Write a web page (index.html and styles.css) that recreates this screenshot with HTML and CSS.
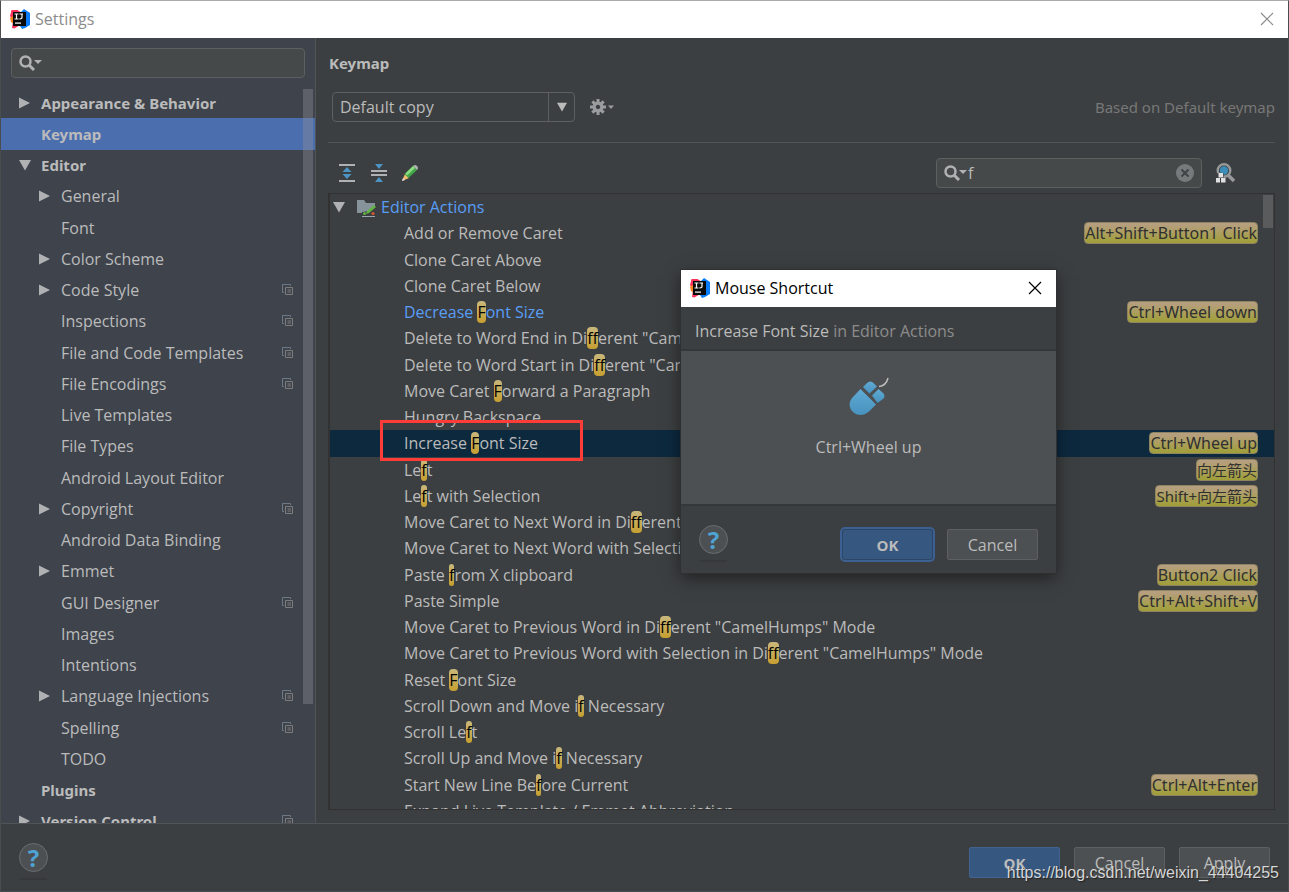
FILE: index.html
```html
<!DOCTYPE html>
<html lang="en">
<head>
<meta charset="utf-8">
<title>Settings</title>
<link rel="stylesheet" href="styles.css">
</head>
<body>
<svg class="defs" aria-hidden="true">
  <defs>
    <linearGradient id="gMouse" x1="0" y1="0" x2="0" y2="1"><stop offset="0" stop-color="#60abd3"/><stop offset="1" stop-color="#4792bf"/></linearGradient>
    <symbol id="logo" viewBox="0 0 20 20">
      <path fill="#fc315c" d="M1.500 1l6 0 3 2-2 14-4 2.500-2.500-.5 1-7-3-5z"/>
      <path fill="#fc801d" d="M0 9l4-3v9l-3-2z"/>
      <path fill="#087cfa" d="M10 4l4-4 6 4v12l-5 3-3 1-2-3z"/>
      <rect x="3" y="3" width="13" height="14" fill="#0a0a0a"/>
      <path fill="none" stroke="#fff" stroke-width="1.200" d="M4.500 5h4M6.500 5v5M4.500 10h4M9.500 5h3.500M12 5v3.500q0 1.500-2.500 1.300"/>
      <rect x="5" y="13.500" width="6" height="1.200" fill="#fff"/>
    </symbol>
    <symbol id="right" viewBox="0 0 12 12"><path fill="currentColor" d="M0 0.500L11 6 0 11.500z"/></symbol>
    <symbol id="down" viewBox="0 0 12 12"><path fill="currentColor" d="M0 1h12L6 11.500z"/></symbol>
    <symbol id="search" viewBox="0 0 24 16">
      <circle cx="6.500" cy="6.500" r="5" fill="none" stroke="#afb1b3" stroke-width="2.500"/>
      <path d="M10 10l5 5" stroke="#afb1b3" stroke-width="3"/>
      <path d="M15 5h8l-4 4z" fill="#afb1b3"/>
    </symbol>
    <symbol id="copy" viewBox="0 0 12 12">
      <path fill="none" stroke="#6c7883" d="M2 8.500H.5v-8h8V2"/>
      <path fill="none" stroke="#7d7d7d" d="M3.500 3.500h7v7h-7zM5.500 6h3.500M5.500 8h3.500"/>
    </symbol>
    <symbol id="close" viewBox="0 0 14 14"><path d="M1 1l12 12M13 1L1 13" fill="none" stroke="currentColor" stroke-width="1.200"/></symbol>
  </defs>
</svg>

<div class="window">
  <header class="titlebar">
    <svg class="logo"><use href="#logo"/></svg>
    <span class="title">Settings</span>
    <button class="close" aria-label="Close"><svg><use href="#close"/></svg></button>
  </header>

  <div class="content">
    <aside class="sidebar">
      <label class="search side-search"><svg class="lens"><use href="#search"/></svg><input type="text" aria-label="Search settings"></label>
      <div class="tree-view">
        <ul class="tree">
          <li class="top"><svg class="arrow"><use href="#right"/></svg><span>Appearance &amp; Behavior</span></li>
          <li class="top selected"><i class="arrow"></i><span>Keymap</span></li>
          <li class="top"><svg class="arrow"><use href="#down"/></svg><span>Editor</span></li>
          <li><svg class="arrow"><use href="#right"/></svg><span>General</span></li>
          <li><i class="arrow"></i><span>Font</span></li>
          <li><svg class="arrow"><use href="#right"/></svg><span>Color Scheme</span></li>
          <li><svg class="arrow"><use href="#right"/></svg><span>Code Style</span><svg class="copy"><use href="#copy"/></svg></li>
          <li><i class="arrow"></i><span>Inspections</span><svg class="copy"><use href="#copy"/></svg></li>
          <li><i class="arrow"></i><span>File and Code Templates</span><svg class="copy"><use href="#copy"/></svg></li>
          <li><i class="arrow"></i><span>File Encodings</span><svg class="copy"><use href="#copy"/></svg></li>
          <li><i class="arrow"></i><span>Live Templates</span></li>
          <li><i class="arrow"></i><span>File Types</span></li>
          <li><i class="arrow"></i><span>Android Layout Editor</span></li>
          <li><svg class="arrow"><use href="#right"/></svg><span>Copyright</span><svg class="copy"><use href="#copy"/></svg></li>
          <li><i class="arrow"></i><span>Android Data Binding</span></li>
          <li><svg class="arrow"><use href="#right"/></svg><span>Emmet</span></li>
          <li><i class="arrow"></i><span>GUI Designer</span><svg class="copy"><use href="#copy"/></svg></li>
          <li><i class="arrow"></i><span>Images</span></li>
          <li><i class="arrow"></i><span>Intentions</span></li>
          <li><svg class="arrow"><use href="#right"/></svg><span>Language Injections</span><svg class="copy"><use href="#copy"/></svg></li>
          <li><i class="arrow"></i><span>Spelling</span><svg class="copy"><use href="#copy"/></svg></li>
          <li><i class="arrow"></i><span>TODO</span></li>
          <li class="top"><i class="arrow"></i><span>Plugins</span></li>
          <li class="top"><svg class="arrow"><use href="#right"/></svg><span>Version Control</span><svg class="copy"><use href="#copy"/></svg></li>
        </ul>
        <div class="thumb side-thumb"></div>
      </div>
    </aside>

    <main class="main">
      <h1>Keymap</h1>
      <div class="scheme">
        <div class="combo">
          <select aria-label="Keymap scheme"><option>Default copy</option></select>
          <span class="combo-arrow"><svg><use href="#down"/></svg></span>
        </div>
        <button class="icon-button" aria-label="Scheme actions">
          <svg class="gear" viewBox="0 0 26 16"><g fill="#9a9c9e"><path fill-rule="evenodd" d="M8 2.500a5.500 5.500 0 1 0 .01 0zM8 5.800a2.200 2.200 0 1 1-.01 0z"/><path d="M6.500 0h3v4h-3zM6.500 12h3v4h-3zM0 6.500h4v3H0zM12 6.500h4v3h-4z"/><path d="M6.500 0h3v4h-3zM6.500 12h3v4h-3zM0 6.500h4v3H0zM12 6.500h4v3h-4z" transform="rotate(45 8 8)"/><path d="M18 6.500h6l-3 3.500z"/></g></svg>
        </button>
        <span class="based">Based on Default keymap</span>
      </div>

      <div class="toolbar">
        <button class="icon-button" aria-label="Expand all"><svg class="tool" viewBox="0 0 18 18"><path d="M1 1h16M1 17h16" stroke="#afb1b3" stroke-width="2"/><path d="M9 3l4.500 5h-9zM9 15l4.500-5h-9z" fill="#4c94c4"/></svg></button>
        <button class="icon-button" aria-label="Collapse all"><svg class="tool" viewBox="0 0 18 18"><path d="M1 7h16M1 11h16" stroke="#afb1b3" stroke-width="2"/><path d="M5 0h8L9 5zM5 18h8l-4-5z" fill="#4c94c4"/></svg></button>
        <button class="icon-button" aria-label="Edit shortcut"><svg class="tool" viewBox="1 0 18 18"><path d="M1 17l3-7 4 4z" fill="#f2bb72"/><path d="M1 17l1-3 2 2z" fill="#ddd"/><path d="M3.500 10L12 2l4 4-8.500 8z" fill="#43a647"/><path d="M4.500 9.500L12 2l2 2-8 7.500z" fill="#8bdc83"/><path d="M12 2q2-2 4 0t0 4z" fill="#aeb3ad"/></svg></button>
        <label class="search action-search"><svg class="lens"><use href="#search"/></svg><input type="text" value="f" aria-label="Search actions"><button class="clear" aria-label="Clear"><svg viewBox="0 0 18 18"><circle cx="9" cy="9" r="9" fill="#777a7b"/><path d="M5.500 5.500l7 7M12.500 5.500l-7 7" stroke="#3f4345" stroke-width="2"/></svg></button></label>
        <button class="icon-button" aria-label="Find actions by shortcut"><svg class="find" viewBox="1 0 20 20"><path d="M13 12l6 6" stroke="#96989a" stroke-width="3.500"/><circle cx="9" cy="7.500" r="6.300" fill="#3b4245" stroke="#96989a" stroke-width="2.400"/><circle cx="9" cy="7.500" r="4.200" fill="#3b8db8"/><path d="M2.500 10h6v5h-6z" fill="#3c3f41"/><path d="M1 15h4v4.500H1zM6 15h4.500v4.500H6zM3.500 10H8v4.500H3.500z" fill="#e0e0e0"/></svg></button>
      </div>

      <div class="actions-view">
        <ul class="actions">
          <li class="group"><svg class="arrow"><use href="#down"/></svg><svg class="folder" viewBox="0 0 20 18"><path d="M0 1h7l2 3h9v10H0z" fill="#87939a"/><path d="M5 13l8-1 5-4v8H5z" fill="#3c3f41"/><path d="M9 15l1-3 7-6 2 2-7 6z" fill="#62b543"/><circle cx="7.500" cy="14.500" r="1.500" fill="#62b543"/><circle cx="16" cy="14.500" r="1.500" fill="#e05a33"/><path d="M5 17.500h13" stroke="#9aa7b0"/></svg><span>Editor Actions</span></li>
          <li><span>Add or Remove Caret</span><kbd>Alt+Shift+Button1 Click</kbd></li>
          <li><span>Clone Caret Above</span></li>
          <li><span>Clone Caret Below</span></li>
          <li class="changed"><span>Decrease <mark>F</mark>ont Size</span><kbd>Ctrl+Wheel down</kbd></li>
          <li><span>Delete to Word End in Di<mark>f</mark><mark>f</mark>erent "CamelHumps" Mode</span></li>
          <li><span>Delete to Word Start in Di<mark>f</mark><mark>f</mark>erent "CamelHumps" Mode</span></li>
          <li><span>Move Caret <mark>F</mark>orward a Paragraph</span></li>
          <li><span>Hungry Backspace</span></li>
          <li class="current"><span>Increase <mark>F</mark>ont Size</span><kbd>Ctrl+Wheel up</kbd><div class="callout"></div></li>
          <li><span>Le<mark>f</mark>t</span><kbd class="cjk">向左箭头</kbd></li>
          <li><span>Le<mark>f</mark>t with Selection</span><kbd class="cjk">Shift+向左箭头</kbd></li>
          <li><span>Move Caret to Next Word in Di<mark>f</mark><mark>f</mark>erent "CamelHumps" Mode</span></li>
          <li><span>Move Caret to Next Word with Selection in Di<mark>f</mark><mark>f</mark>erent "CamelHumps" Mode</span></li>
          <li><span>Paste <mark>f</mark>rom X clipboard</span><kbd>Button2 Click</kbd></li>
          <li><span>Paste Simple</span><kbd>Ctrl+Alt+Shift+V</kbd></li>
          <li><span>Move Caret to Previous Word in Di<mark>f</mark><mark>f</mark>erent "CamelHumps" Mode</span></li>
          <li><span>Move Caret to Previous Word with Selection in Di<mark>f</mark><mark>f</mark>erent "CamelHumps" Mode</span></li>
          <li><span>Reset <mark>F</mark>ont Size</span></li>
          <li><span>Scroll Down and Move i<mark>f</mark> Necessary</span></li>
          <li><span>Scroll Le<mark>f</mark>t</span></li>
          <li><span>Scroll Up and Move i<mark>f</mark> Necessary</span></li>
          <li><span>Start New Line Be<mark>f</mark>ore Current</span><kbd>Ctrl+Alt+Enter</kbd></li>
          <li><span>Expand Live Template / Emmet Abbreviation</span></li>
        </ul>
        <div class="thumb actions-thumb"></div>
      </div>
    </main>
  </div>

  <footer class="footer">
    <button class="help" aria-label="Help">?</button>
    <button class="btn primary">OK</button>
    <button class="btn">Cancel</button>
    <button class="btn">Apply</button>
  </footer>

  <section class="dialog" role="dialog" aria-label="Mouse Shortcut">
    <header class="dialog-title">
      <svg class="logo"><use href="#logo"/></svg>
      <span class="title">Mouse Shortcut</span>
      <button class="close" aria-label="Close dialog"><svg><use href="#close"/></svg></button>
    </header>
    <p class="dialog-action">Increase Font Size <span>in Editor Actions</span></p>
    <div class="dialog-body">
      <svg class="mouse" viewBox="0 0 40 40"><g fill="url(#gMouse)"><path d="M11.500 12L27 27.500 20.500 34C15 39.500 8 39 4 35S-1 25 4 20z"/><path d="M14 10L17.500 6.500q4-4 7.500 0l3 3-7.500 7z"/><path d="M23 18.500L29.500 12l5 4.500q2 2.500 0 5L28.500 26z"/></g><path d="M30 9.500Q37 9 39 1" fill="none" stroke="#bcbcbc" stroke-width="1.500"/></svg>
      <span>Ctrl+Wheel up</span>
    </div>
    <footer class="dialog-footer">
      <button class="help" aria-label="Dialog help">?</button>
      <button class="btn primary focused">OK</button>
      <button class="btn">Cancel</button>
    </footer>
  </section>

  <div class="watermark">https://blog.csdn.net/weixin_44404255</div>
</div>
</body>
</html>
```
FILE: styles.css
```css
* { box-sizing: border-box; }
body {
  margin: 0;
  background: #3c3f41;
  color: #bbbbbb;
  font: 16px/20px "Open Sans", "Noto Sans CJK SC", sans-serif;
}
button, input, select { font: inherit; color: inherit; margin: 0; }
ul { list-style: none; margin: 0; padding: 0; }
svg { display: block; flex: none; }
.defs { position: absolute; width: 0; height: 0; }

.window {
  position: relative;
  display: flex;
  flex-direction: column;
  height: 100vh;
  overflow: hidden;
  border: 1px solid #4a4d4f;
  border-top-color: #aaaaaa;
}
.titlebar, .dialog-title {
  display: flex;
  align-items: center;
  flex: none;
  height: 37px;
  padding: 0 14px 1px 9px;
  gap: 5px;
  background: #ffffff;
  color: #8c8c8c;
}
.dialog-title { color: #000000; }
.logo { width: 20px; height: 20px; }
.close {
  margin-left: auto;
  padding: 0;
  border: 0;
  background: none;
}
.close svg { width: 14px; height: 14px; }

.content { display: flex; flex: 1; min-height: 0; }

.sidebar {
  display: flex;
  flex-direction: column;
  flex: none;
  width: 315px;
  padding-top: 10px;
  border-right: 1px solid #515456;
  background: #3e434c;
}
.search {
  display: flex;
  align-items: center;
  flex: none;
  height: 30px;
  padding: 0 7px;
  border: 1px solid #5e6060;
  border-radius: 4px;
  background: #45494a;
}
.search input {
  flex: 1;
  min-width: 0;
  padding: 0;
  border: 0;
  outline: 0;
  background: none;
}
.lens { width: 24px; height: 16px; }
.side-search { margin: 0 10px 9px; }
.tree-view { position: relative; flex: 1; min-height: 0; overflow: hidden; }
.tree { display: flex; flex-direction: column; height: 750px; }
.tree li {
  display: flex;
  align-items: center;
  flex: 1;
  gap: 10px;
  padding: 0 21px 0 38px;
}
.tree .top { padding-left: 18px; font: bold 15px/18px "Noto Sans", sans-serif; }
.tree .selected { background: #4b6eaf; }
.arrow { width: 12px; height: 12px; color: #afb1b3; }
.copy { width: 12px; height: 12px; margin-left: auto; }
.thumb { position: absolute; width: 10px; background: rgba(140, 140, 150, 0.4); }
.side-thumb { top: 2px; right: 2px; height: 615px; }

.main {
  display: flex;
  flex-direction: column;
  flex: 1;
  min-width: 0;
  padding: 0 13px 13px 12px;
}
h1 { margin: 15px 1px; font: bold 15px/20px "Noto Sans", sans-serif; }
.scheme {
  display: flex;
  align-items: center;
  gap: 15px;
  padding: 4px 0 20px 4px;
  border-bottom: 1px solid #515456;
}
.combo {
  display: flex;
  width: 243px;
  height: 30px;
  border: 1px solid #5e6060;
  border-radius: 4px;
}
.combo select {
  flex: 1;
  padding: 0 7px;
  border: 0;
  outline: 0;
  appearance: none;
  background: transparent;
}
.combo-arrow {
  display: flex;
  align-items: center;
  justify-content: center;
  width: 26px;
  border-left: 1px solid #5e6060;
}
.combo-arrow svg { width: 10px; height: 10px; }
.icon-button { padding: 0; border: 0; background: none; }
.gear { width: 26px; height: 16px; }
.based { margin-left: auto; color: #777777; font: 15px/20px "Noto Sans", sans-serif; }

.toolbar {
  display: flex;
  align-items: center;
  gap: 14px;
  padding: 15px 39px 5px 10px;
}
.tool { width: 18px; height: 18px; }
.find { width: 20px; height: 20px; }
.action-search { width: 266px; margin-left: auto; }
.clear { padding: 0; border: 0; background: none; }
.clear svg { width: 18px; height: 18px; }

.actions-view {
  position: relative;
  flex: 1;
  min-height: 0;
  overflow: hidden;
  border: 1px solid #323232;
  border-left-width: 2px;
}
.actions { display: flex; flex-direction: column; height: 630px; }
.actions li {
  position: relative;
  display: flex;
  align-items: center;
  justify-content: space-between;
  flex: 1;
  min-height: 0;
  padding: 0 16px 0 74px;
  white-space: nowrap;
}
.actions .group { justify-content: flex-start; padding-left: 3px; color: #589df6; }
.folder { width: 20px; height: 18px; margin: 2px 4px 0 12px; }
.actions .changed > span { color: #589df6; }
.actions .current { z-index: 1; background: #0d293e; }
mark {
  border-radius: 4px;
  background: linear-gradient(#c9b87c, #c69f30);
  color: #000000;
}
kbd {
  height: 22px;
  border: 1px solid #8f8462;
  border-radius: 4px;
  background: linear-gradient(#b89f84, #a09f38);
  color: #303030;
  font: 16px/20px "Noto Sans", "Noto Sans CJK SC", sans-serif;
}
kbd.cjk { font-size: 15px; }
.actions-thumb { top: 1px; right: 1px; height: 33px; background: #5a5b5d; }
.callout {
  position: absolute;
  top: -10px;
  left: 50px;
  width: 203px;
  height: 41px;
  border: 3px solid #ff3c38;
}

.footer {
  display: flex;
  align-items: center;
  flex: none;
  gap: 14px;
  height: 68px;
  padding: 10px 18px 0;
  border-top: 1px solid #515456;
}
.btn {
  width: 91px;
  height: 31px;
  padding: 0;
  border: 1px solid #5e6060;
  border-radius: 2px;
  background: #4c5052;
}
.primary { border-color: #40648f; background: #365880; font-weight: bold; font-size: 15px; }
.focused { outline: 2px solid #3d6093; outline-offset: 0; border-color: #2c4668; border-radius: 3px; }
.help {
  position: relative;
  width: 29px;
  height: 29px;
  margin: 0 auto 10px 0;
  padding: 0;
  border: 1px solid #6b6e70;
  border-radius: 50%;
  background: #4c5052;
  color: #4fa3d4;
  font: bold 24px/27px "Open Sans", sans-serif;
}
.help::after {
  content: "";
  position: absolute;
  top: 34px;
  left: 0;
  width: 27px;
  height: 2px;
  background: #36383a;
}

.dialog {
  position: absolute;
  top: 269px;
  left: 680px;
  z-index: 2;
  display: flex;
  flex-direction: column;
  width: 375px;
  background: #3c3f41;
  box-shadow: 0 0 0 1px #2e3032, 0 5px 16px rgba(0, 0, 0, 0.5);
}
.dialog-action {
  margin: 0;
  padding: 14px 14px 8px;
  border-bottom: 2px solid #35383a;
}
.dialog-action span { color: #8c8c8c; }
.dialog-body {
  display: flex;
  flex-direction: column;
  align-items: center;
  gap: 20px;
  height: 153px;
  padding-top: 26px;
  background: #4c5052;
}
.mouse { width: 40px; height: 40px; }
.dialog-footer {
  display: flex;
  align-items: center;
  gap: 14px;
  height: 69px;
  padding: 10px 18px 0;
  border-top: 2px solid #35383a;
}
.watermark {
  position: absolute;
  right: 9px;
  bottom: 8px;
  z-index: 3;
  color: #d4d6d7;
  font: 16px/20px "Liberation Sans", sans-serif;
  text-shadow: 1px 1px 1px #222222;
}
```
